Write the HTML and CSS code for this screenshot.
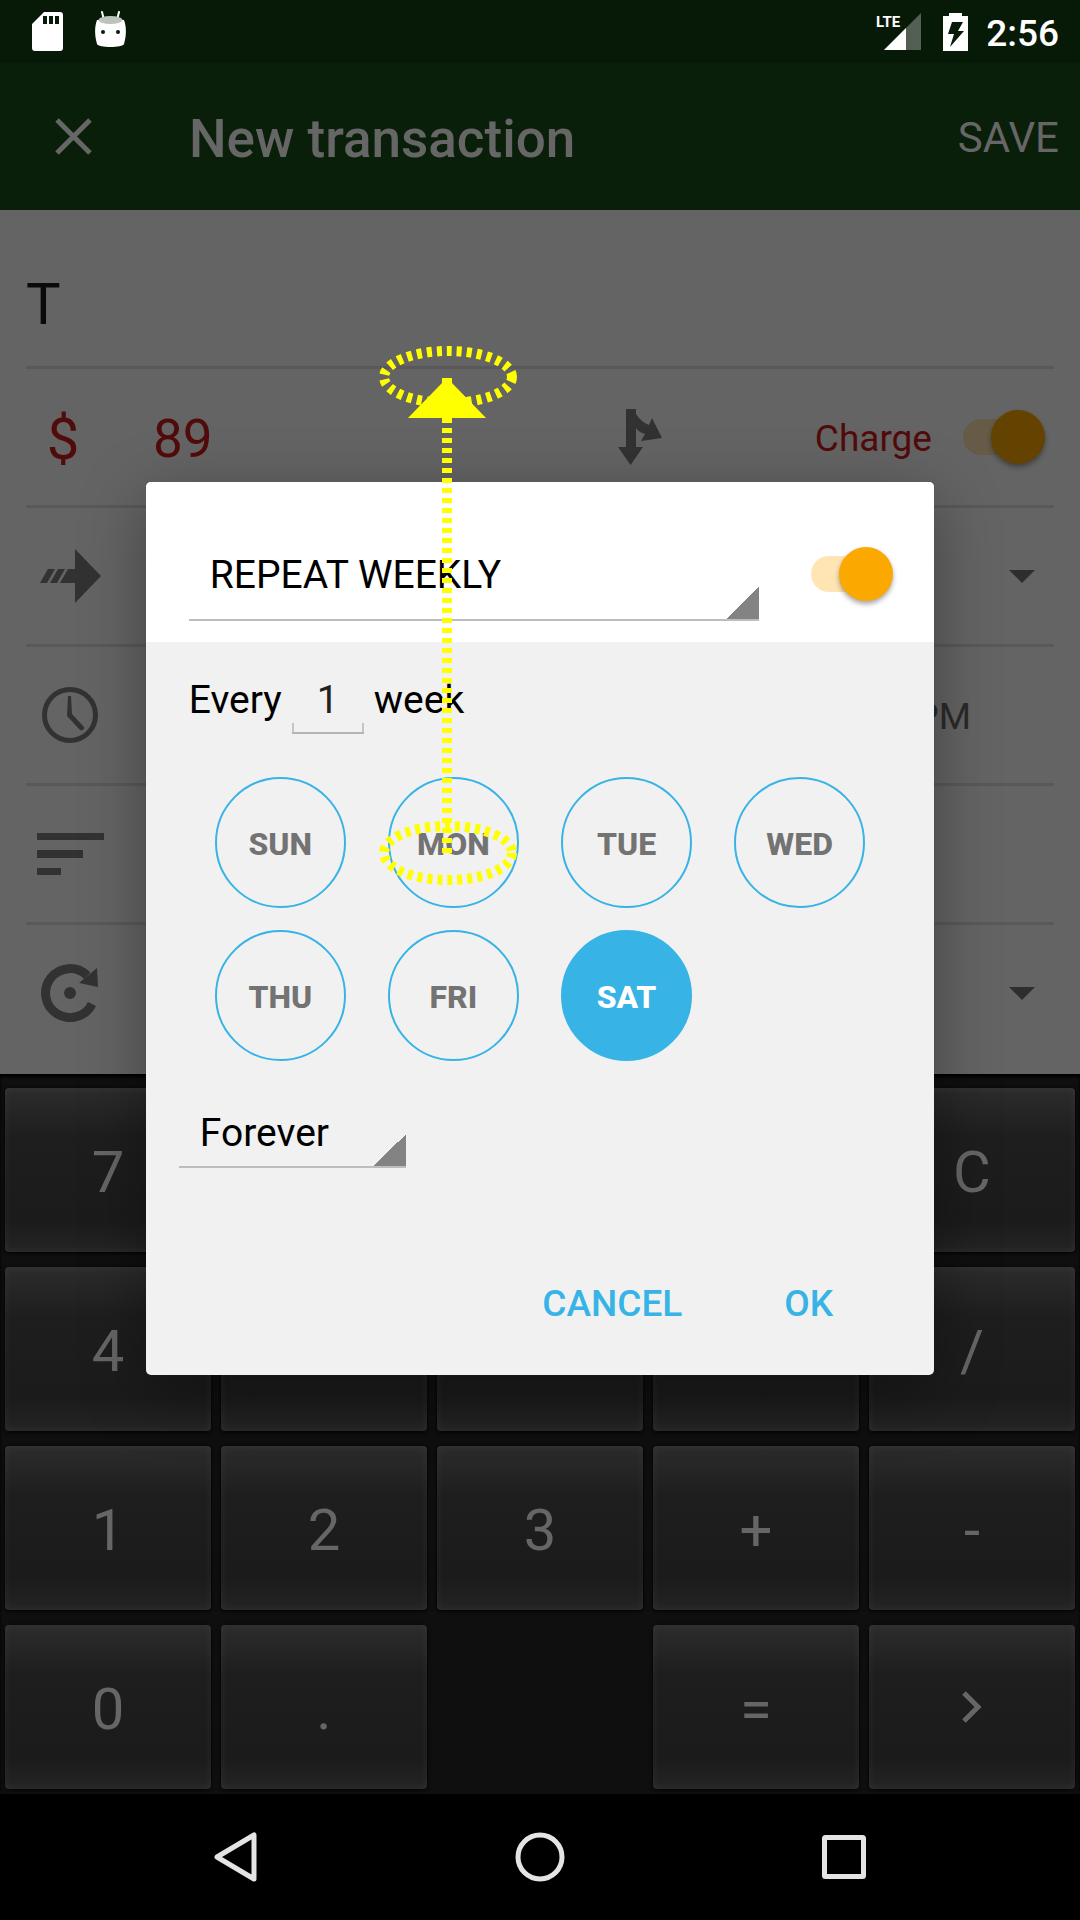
FILE: index.html
```html
<!DOCTYPE html>
<html lang="en">
<head>
<meta charset="utf-8">
<meta name="viewport" content="width=device-width, initial-scale=1">
<title>New transaction</title>
<link rel="stylesheet" href="styles.css">
</head>
<body>
<div class="screen">
  <header class="status">
    <svg class="status-icon" width="31" height="39" viewBox="0 0 31 39" aria-hidden="true"><path fill="#fff" fill-rule="evenodd" d="M12 0h16a3 3 0 0 1 3 3v33a3 3 0 0 1-3 3H3a3 3 0 0 1-3-3V12zM11 4v8h4V4zM17 4v8h4V4zM23 4v8h4V4z"/></svg>
    <svg class="status-icon droid" width="31" height="37" viewBox="0 0 31 37" aria-hidden="true"><path d="M7 1l2 8M24 1l-2 8" stroke="#fff" stroke-width="2" stroke-linecap="round"/><path fill="#fff" d="M2 9h27c3 8 2 17 0 24-1 4-26 4-27 0-2-7-3-16 0-24z"/><ellipse cx="15.500" cy="9" rx="12" ry="4" fill="#bcc2bc"/><circle cx="8" cy="21" r="2" fill="#071907"/><circle cx="23" cy="21" r="2" fill="#071907"/></svg>
    <span class="status-gap"></span>
    <svg class="signal" width="46" height="38" viewBox="0 0 46 38" role="img" aria-label="LTE signal"><path fill="#535f53" d="M45 0v37H8z"/><path fill="#fff" d="M8 37l22-22v22z"/><text class="signal-text" x="0" y="14">LTE</text></svg>
    <svg class="battery" width="25" height="38" viewBox="0 0 25 38" aria-hidden="true"><path fill="#fff" d="M6 0h13v3h6v35H0V3h6z"/><path fill="#071907" d="M9 9h11l-5 9h6L7 34l4-13H5z"/></svg>
    <span class="clock">2:56</span>
  </header>

  <div class="toolbar">
    <button class="close" type="button" aria-label="Close"><svg width="37" height="37" viewBox="0 0 37 37"><path d="M2 2l33 33M35 2L2 35" stroke="#666" stroke-width="5"/></svg></button>
    <h1 class="title">New transaction</h1>
    <button class="save" type="button">SAVE</button>
  </div>

  <main class="form">
    <div class="row row-name"><input class="name" type="text" value="T" aria-label="Name"></div>
    <div class="row">
      <label class="currency" for="amount">$</label>
      <input class="amount" id="amount" type="text" value="89">
      <button class="split" type="button" aria-label="Split"><svg width="44" height="56" viewBox="0 0 44 56"><path fill="#323232" d="M8 0h10v5c3 5 8 9 13 11l3-7 10 20-21 3 4-7c-4-1-7-3-9-6v19h7L12.500 56 0 38h8z"/></svg></button>
      <label class="charge" for="charge">Charge</label>
      <input class="switch switch-dim" id="charge" type="checkbox" role="switch" checked>
    </div>
    <div class="row">
      <span class="row-icon"><svg width="61" height="54" viewBox="0 0 61 54"><path fill="#323232" d="M8 20h7L7 34H0zM18 20h7l-8 14h-7zM28 20h7V0l26 27-26 27V34H20z"/></svg></span>
      <span class="row-space"></span>
      <svg class="caret" width="26" height="13" viewBox="0 0 26 13"><path fill="#2e2e2e" d="M0 0h26L13 13z"/></svg>
    </div>
    <div class="row">
      <span class="row-icon"><svg width="56" height="56" viewBox="0 0 56 56"><circle cx="28" cy="28" r="25.500" fill="none" stroke="#323232" stroke-width="5"/><path fill="#323232" d="M26 9h3l1 18 12 13c1 2-2 4-4 3L25 29z"/></svg></span>
      <span class="row-space"></span>
      <span class="time">PM</span>
    </div>
    <div class="row">
      <span class="row-icon"><svg width="67" height="42" viewBox="0 0 67 42"><path fill="#323232" d="M0 0h67v7H0zM0 17h46v8H0zM0 35h24v7H0z"/></svg></span>
    </div>
    <div class="row row-last">
      <span class="row-icon"><svg width="58" height="58" viewBox="0 0 58 58"><path d="M46.300 11.700A24.500 24.500 0 1 0 51 40" fill="none" stroke="#323232" stroke-width="9"/><path fill="#323232" d="M56 4l1 19-19-4z"/><circle cx="29" cy="29" r="6" fill="#323232"/></svg></span>
      <span class="row-space"></span>
      <svg class="caret" width="26" height="13" viewBox="0 0 26 13"><path fill="#2e2e2e" d="M0 0h26L13 13z"/></svg>
    </div>
  </main>

  <section class="keypad" aria-label="Calculator">
    <button class="key" type="button">7</button>
    <button class="key" type="button" aria-label="8"></button>
    <button class="key" type="button" aria-label="9"></button>
    <button class="key" type="button" aria-label="Delete"></button>
    <button class="key" type="button">C</button>
    <button class="key" type="button">4</button>
    <button class="key" type="button" aria-label="5"></button>
    <button class="key" type="button" aria-label="6"></button>
    <button class="key" type="button" aria-label="Multiply"></button>
    <button class="key" type="button">/</button>
    <button class="key" type="button">1</button>
    <button class="key" type="button">2</button>
    <button class="key" type="button">3</button>
    <button class="key" type="button">+</button>
    <button class="key" type="button">-</button>
    <button class="key" type="button">0</button>
    <button class="key" type="button">.</button>
    <span></span>
    <button class="key" type="button">=</button>
    <button class="key key-next" type="button" aria-label="Next"><svg width="20" height="32" viewBox="0 0 20 32"><path d="M2 2l14 14L2 30" fill="none" stroke="#666" stroke-width="5"/></svg></button>
  </section>

  <nav class="navbar" aria-label="System">
    <button class="nav-button" type="button" aria-label="Back"><svg width="50" height="50" viewBox="0 0 50 50"><path d="M43 3v44L6 25z" fill="none" stroke="#e4e4e4" stroke-width="5" stroke-linejoin="round"/></svg></button>
    <button class="nav-button" type="button" aria-label="Home"><svg width="50" height="50" viewBox="0 0 50 50"><circle cx="25" cy="25" r="22" fill="none" stroke="#e4e4e4" stroke-width="5"/></svg></button>
    <button class="nav-button" type="button" aria-label="Overview"><svg width="44" height="44" viewBox="0 0 44 44"><rect x="2.500" y="2.500" width="39" height="39" rx="1" fill="none" stroke="#e4e4e4" stroke-width="5"/></svg></button>
  </nav>

  <div class="overlay">
    <form class="dialog" role="dialog" aria-label="Repeat">
      <div class="dialog-head">
        <select class="spinner spinner-wide" aria-label="Repeat frequency"><option>REPEAT WEEKLY</option></select>
        <input class="switch" type="checkbox" role="switch" aria-label="Repeat" checked>
      </div>
      <div class="interval">
        <label for="interval">Every</label>
        <input class="interval-input" id="interval" type="text" value="1">
        <span>week</span>
      </div>
      <div class="days">
        <label class="day"><input class="day-input" type="checkbox">SUN</label>
        <label class="day"><input class="day-input" type="checkbox">MON</label>
        <label class="day"><input class="day-input" type="checkbox">TUE</label>
        <label class="day"><input class="day-input" type="checkbox">WED</label>
        <label class="day"><input class="day-input" type="checkbox">THU</label>
        <label class="day"><input class="day-input" type="checkbox">FRI</label>
        <label class="day"><input class="day-input" type="checkbox" checked>SAT</label>
      </div>
      <select class="spinner spinner-end" aria-label="Repeat until"><option>Forever</option></select>
      <div class="actions">
        <button class="action" type="button">CANCEL</button>
        <button class="action" type="button">OK</button>
      </div>
    </form>
  </div>

  <svg class="gesture" width="142" height="542" viewBox="0 0 142 542" aria-hidden="true">
    <g fill="none" stroke="#ff0" stroke-width="10" stroke-dasharray="5 5">
      <ellipse cx="71" cy="33" rx="64" ry="26"/>
      <ellipse cx="71" cy="509" rx="64" ry="27"/>
      <path d="M70 509V34"/>
    </g>
    <path fill="#ff0" d="M65 34h10v5l34 35H31l34-35z"/>
  </svg>
</div>
</body>
</html>
```
FILE: styles.css
```css
* {
  box-sizing: border-box;
}

body {
  margin: 0;
  background: #000;
  font-family: Roboto, "Liberation Sans", sans-serif;
}

button,
input,
select {
  margin: 0;
  padding: 0;
  border: 0;
  border-radius: 0;
  background: none;
  color: inherit;
  font: inherit;
  outline: 0;
}

svg {
  display: block;
  flex: none;
}

.screen {
  position: relative;
  display: flex;
  flex-direction: column;
  min-height: 100vh;
}

/* Status bar */
.status {
  display: flex;
  height: 63px;
  padding: 0 21px 0 32px;
  align-items: center;
  background: #071907;
  color: #fff;
}

.droid {
  margin: 0 0 5px 32px;
}

.status-gap {
  flex: 1;
}

.signal-text {
  fill: #fff;
  font: bold 15px "Liberation Sans Narrow", Roboto, sans-serif;
}

.battery {
  margin: 0 18px 0 21px;
}

.clock {
  padding-top: 4px;
  font-size: 37px;
  font-weight: 500;
  line-height: 44px;
}

/* Toolbar */
.toolbar {
  display: flex;
  height: 147px;
  padding-right: 21px;
  align-items: center;
  background: #0a1f09;
  color: #666;
}

.close {
  display: flex;
  width: 147px;
  height: 147px;
  align-items: center;
  justify-content: center;
}

.title {
  flex: 1;
  margin: 0;
  padding: 4px 0 0 42px;
  font-size: 53px;
  font-weight: 500;
}

.save {
  padding-top: 2px;
  font-size: 42px;
}

/* Transaction form */
.form {
  flex: 1;
  padding: 0 26px;
  background: #646464;
}

.row {
  display: flex;
  height: 139px;
  align-items: center;
  border-bottom: 3px solid #595959;
}

.row-name {
  height: 159px;
  padding-top: 30px;
}

.row-last {
  border-color: transparent;
  margin-bottom: 10px;
}

.name {
  width: 100%;
  padding-top: 2px;
  color: #0a0a0a;
  font-size: 58px;
}

.row-icon {
  display: flex;
  width: 88px;
  justify-content: center;
}

.row-space {
  flex: 1;
}

.currency,
.amount,
.charge {
  padding-top: 3px;
  color: #520b0b;
}

.currency {
  width: 74px;
  text-align: center;
  font-size: 58px;
}

.amount {
  flex: 1;
  min-width: 0;
  margin-left: 53px;
  font-size: 53px;
}

.charge {
  margin: 0 31px 0 153px;
  font-size: 37px;
}

.time {
  margin-right: 83px;
  padding-top: 2px;
  color: #2a2a2a;
  font-size: 37px;
}

.caret {
  margin-right: 19px;
}

.switch {
  position: relative;
  flex: none;
  width: 82px;
  height: 54px;
  margin-right: 9px;
  appearance: none;
}

.switch::before,
.switch::after {
  position: absolute;
  content: "";
}

.switch::before {
  inset: 9px 8px 9px 0;
  border-radius: 18px;
  background: #ffe5b3;
}

.switch::after {
  inset: 0 0 0 auto;
  width: 54px;
  border-radius: 50%;
  background: #fba800;
  box-shadow: 0 3px 5px rgba(0, 0, 0, 0.35);
}

.switch-dim::before {
  background: #665b47;
}

.switch-dim::after {
  background: #644300;
}

/* Calculator keypad */
.keypad {
  display: grid;
  grid-template-columns: repeat(5, 1fr);
  grid-auto-rows: 164px;
  gap: 15px 10px;
  padding: 14px 5px 5px;
  background: #0f0f0f;
  box-shadow: inset 0 3px 3px #000;
}

.key {
  display: flex;
  padding-top: 4px;
  align-items: center;
  justify-content: center;
  border-radius: 4px;
  background: linear-gradient(#2c2c2c, #1e1e1e 30%, #1b1b1b 80%, #242424);
  box-shadow: inset 0 0 8px rgba(255, 255, 255, 0.06), 0 1px 4px #000;
  color: #666;
  font-size: 58px;
}

.key-next {
  padding-top: 0;
}

/* System navigation */
.navbar {
  display: flex;
  height: 126px;
  padding: 0 84px;
  background: #000;
}

.nav-button {
  display: flex;
  flex: 1;
  align-items: center;
  justify-content: center;
}

/* Repeat dialog */
.overlay {
  position: absolute;
  inset: 63px 0 126px;
  display: flex;
  align-items: center;
  justify-content: center;
}

.dialog {
  width: 73%;
  padding-bottom: 25px;
  border-radius: 5px;
  background: #f1f1f1;
  box-shadow: 0 16px 64px rgba(0, 0, 0, 0.35);
  color: #000;
  font-size: 39px;
}

.dialog-head {
  display: flex;
  padding: 45px 32px 21px 43px;
  align-items: center;
  justify-content: space-between;
  border-radius: 5px 5px 0 0;
  background: #fff;
}

.spinner {
  display: block;
  padding: 4px 0 0 21px;
  appearance: none;
  border-bottom: 2px solid #bdbdbd;
  background: linear-gradient(135deg, transparent 50%, #838383 50%) right bottom / 32px 32px no-repeat;
}

.spinner-wide {
  width: 570px;
  height: 94px;
}

.spinner-end {
  width: 227px;
  height: 72px;
  margin: 35px 0 0 33px;
}

.interval {
  display: flex;
  gap: 10px;
  margin: 22px 43px 43px;
  line-height: 72px;
  height: 70px;
}

.interval-input {
  width: 72px;
  height: 70px;
  padding-top: 3px;
  border-bottom: 2px solid #b5b5b5;
  background:
    linear-gradient(#c4c4c4, #c4c4c4) left bottom / 2px 9px no-repeat,
    linear-gradient(#c4c4c4, #c4c4c4) right bottom / 2px 9px no-repeat;
  color: #222;
  text-align: center;
}

.days {
  display: grid;
  grid-template-columns: repeat(4, 131px);
  justify-content: space-between;
  gap: 22px 0;
  padding: 0 69px;
}

.day {
  position: relative;
  display: flex;
  height: 131px;
  padding-top: 2px;
  align-items: center;
  justify-content: center;
  border: 2px solid #37b4e5;
  border-radius: 50%;
  color: #737373;
  font-size: 32px;
  font-weight: 800;
}

.day-input {
  position: absolute;
  inset: 0;
  appearance: none;
}

.day:has(:checked) {
  background: #37b4e5;
  color: #fff;
}

.actions {
  display: flex;
  gap: 62px;
  margin-top: 86px;
  padding-right: 81px;
  justify-content: flex-end;
}

.action {
  height: 96px;
  padding: 2px 20px 0;
  color: #37b4e5;
  font-size: 37px;
  font-weight: 500;
}

/* Drag gesture drawn over the dialog */
.gesture {
  position: absolute;
  top: 344px;
  left: calc(50% - 163px);
  pointer-events: none;
}
```
